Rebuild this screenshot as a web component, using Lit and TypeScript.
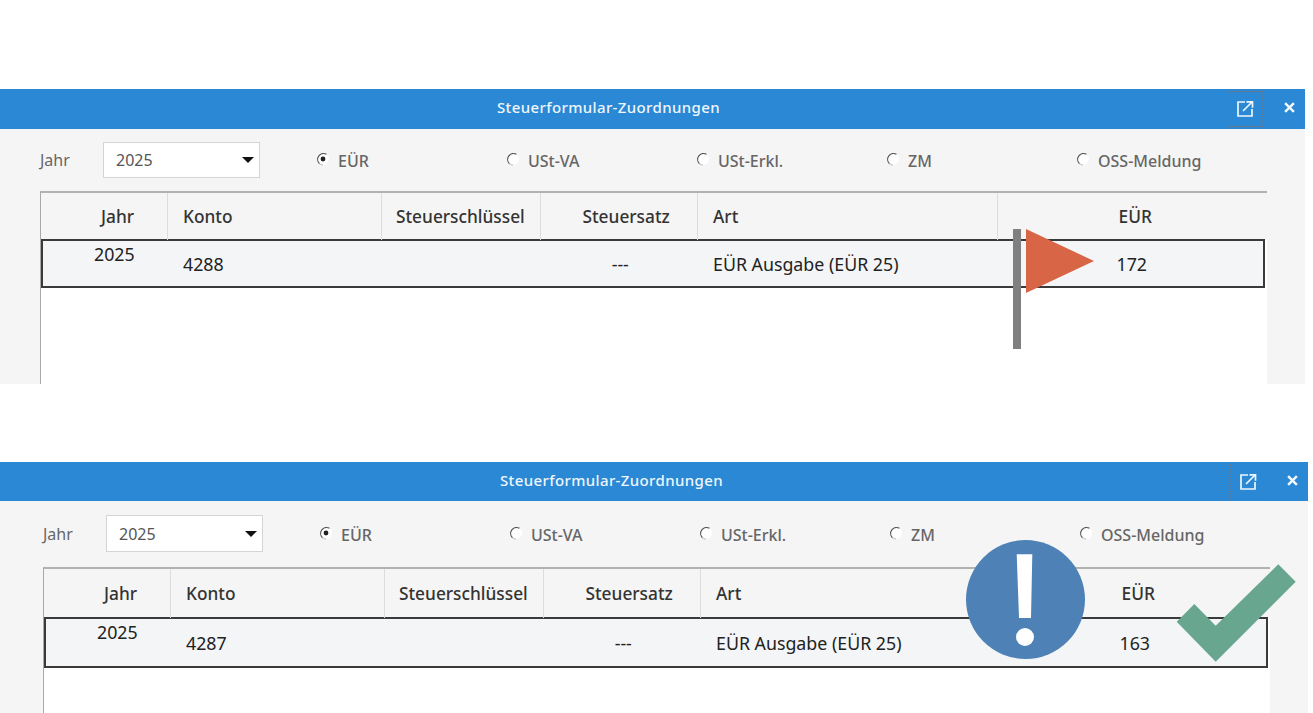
import { LitElement, html, css, svg } from "lit";
import { customElement, property } from "lit/decorators.js";

const RADIOS = ["EÜR", "USt-VA", "USt-Erkl.", "ZM", "OSS-Meldung"];

@customElement("tax-panel")
class TaxPanel extends LitElement {
  @property() konto = "";
  @property() eur = "";

  static styles = css`
    :host { display: flex; flex-direction: column; height: 100%; font-family: "Noto Sans", "Open Sans", sans-serif; color: #333; background: #f5f5f5; }
    .bar { height: var(--bar-h); flex: none; background: #2a88d4; color: #eef6fc; display: flex; align-items: center; justify-content: space-between; padding-left: var(--title-x); font-size: 15px; font-weight: 500; letter-spacing: 0.37px; }
    .title { transform: translateY(-2px); }
    .tools { display: flex; align-items: center; height: 100%; }
    .pop { width: 36px; height: 36px; box-sizing: border-box; border: 1px dotted #5f7890; display: flex; align-items: center; justify-content: center; }
    .close { width: 42px; display: flex; justify-content: center; padding-left: 10px; box-sizing: border-box; margin-top: -3px; }
    .toolbar { flex: none; display: flex; align-items: center; height: var(--tool-h); padding-left: var(--left); padding-bottom: 1px; box-sizing: border-box; font-size: 16px; color: #666; }
    .lbl { width: 63px; }
    .select { width: 157px; height: var(--sel-h); box-sizing: border-box; background: #fff; border: 1px solid #d4d4d4; display: flex; align-items: center; justify-content: space-between; padding: 0 5px 0 12px; margin-right: 56px; color: #555; }
    .select i { width: 0; height: 0; border-left: 6px solid transparent; border-right: 6px solid transparent; border-top: 6px solid #111; }
    .radio { width: 190px; display: flex; align-items: center; gap: 8px; font-weight: 500; padding-top: 2px; }
    .radio svg { flex: none; margin-top: -3px; }
    .table { flex: 1; margin-left: var(--left); margin-right: 38px; background: #fff; border-left: 1px solid #a9a9a9; border-top: 2px solid #b2b2b2; box-sizing: border-box; min-height: 0; }
    .head { display: grid; grid-template-columns: 127px 214px 158.5px 157.5px 299.5px 1fr; }
    .row { display: grid; grid-template-columns: 126px 214px 158.5px 157.5px 299.5px 1fr; }
    .head { height: var(--head-h); background: #f5f5f5; font-size: 17.3px; font-weight: 500; color: #333; }
    .head div { display: flex; align-items: center; box-sizing: border-box; border-right: 1px solid #dcdcdc; padding-left: 15px; }
    .head div:last-child { border-right: none; }
    .head .jahr { padding-left: 60px; }
    .head .satz { padding-left: 42px; }
    .head .sk { padding-left: 14px; }
    .head .eur { justify-content: center; padding-left: 6px; }
    .row { height: var(--row-h); box-sizing: border-box; border: 2px solid #3a3a3a; margin-right: 2px; margin-top: -1px; background: #f3f5f7; font-size: 17.8px; color: #222; align-items: center; }
    .row .year { align-self: start; padding: 1px 0 0 51px; }
    .row .p { padding-left: 14px; }
    .row .c { text-align: center; }
    .row .sum { padding-left: 118px; }
  `;

  private radioIcon(on: boolean) {
    return svg`<svg width="14" height="14" viewBox="0 0 14 14">
      <circle cx="7" cy="7" r="6" fill="#fff"/>
      <path d="M10.5 2.2A6 6 0 0 0 3.5 11.8" fill="none" stroke="#555" stroke-width="1.2"/>
      <path d="M3.5 11.8A6 6 0 0 0 7 13" fill="none" stroke="#bbb" stroke-width="1"/>
      ${on ? svg`<circle cx="7" cy="7" r="2.4" fill="#222"/>` : ""}
    </svg>`;
  }

  render() {
    return html`
      <div class="bar">
        <div class="title">Steuerformular-Zuordnungen</div>
        <div class="tools">
          <div class="pop">
            <svg width="18" height="18" viewBox="0 0 18 18" fill="none" stroke="#eef6fc" stroke-width="1.7">
              <path d="M9 2H2v14h14V9"/>
              <path d="M7 11 15.5 2.5M10.5 1.8h6v6"/>
            </svg>
          </div>
          <div class="close">
            <svg width="11" height="11" viewBox="0 0 10 10" stroke="#f2f8fd" stroke-width="2.2"><path d="M1 1 9 9M9 1 1 9"/></svg>
          </div>
        </div>
      </div>
      <div class="toolbar">
        <div class="lbl">Jahr</div>
        <div class="select"><span>2025</span><i></i></div>
        ${RADIOS.map((r, i) => html`<div class="radio">${this.radioIcon(i === 0)}<span>${r}</span></div>`)}
      </div>
      <div class="table">
        <div class="head">
          <div class="jahr">Jahr</div><div>Konto</div><div class="sk">Steuerschlüssel</div><div class="satz">Steuersatz</div><div>Art</div><div class="eur">EÜR</div>
        </div>
        <div class="row">
          <div class="year">2025</div>
          <div class="p">${this.konto}</div>
          <div></div>
          <div class="c">---</div>
          <div class="p">EÜR Ausgabe (EÜR 25)</div>
          <div class="sum">${this.eur}</div>
        </div>
      </div>
    `;
  }
}

@customElement("app-root")
class AppRoot extends LitElement {
  static styles = css`
    :host { display: block; position: relative; height: 713px; overflow: hidden; background: #fff; }
    .stack { display: flex; flex-direction: column; padding-top: 89px; gap: 78px; }
    .one { height: 295px; width: 1305px; --bar-h: 40px; --tool-h: 62px; --sel-h: 36px; --head-h: 47px; --row-h: 49px; --left: 40px; --title-x: 497px; }
    .two { height: 300px; width: 1308px; --bar-h: 39px; --tool-h: 66px; --sel-h: 37px; --head-h: 49px; --row-h: 51px; --left: 43px; --title-x: 500px; }
    .mark { position: absolute; left: 0; top: 0; pointer-events: none; }
  `;

  render() {
    return html`
      <div class="stack">
        <tax-panel class="one" konto="4288" eur="172"></tax-panel>
        <tax-panel class="two" konto="4287" eur="163"></tax-panel>
      </div>
      <svg class="mark" width="1313" height="713" viewBox="0 0 1313 713">
        <rect x="1013" y="229" width="8" height="120" fill="#808080"/>
        <polygon points="1026,229 1094,261 1026,293" fill="#d86545"/>
        <circle cx="1025.5" cy="599.5" r="59.5" fill="#4e81b6"/>
        <polygon points="1016.7,554.3 1032.3,554.3 1031,618 1019,618" fill="#fff"/>
        <circle cx="1025" cy="637" r="9" fill="#fff"/>
        <polygon points="1176.7,621.7 1194.3,604 1215.7,625.7 1278.3,564.3 1295.7,581.7 1215.7,661.7" fill="#69a68f"/>
      </svg>
    `;
  }
}
